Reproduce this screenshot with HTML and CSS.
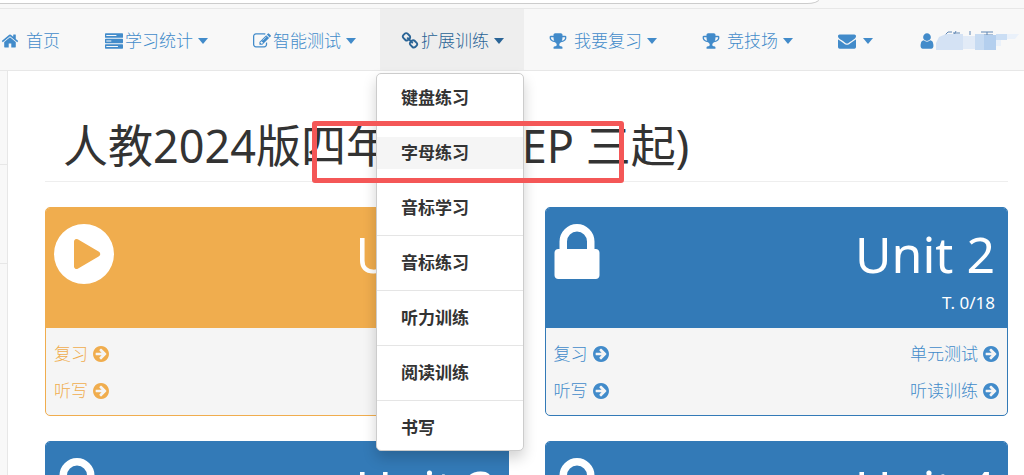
FILE: index.html
```
<!DOCTYPE html>
<html lang="zh-CN">
<head>
    <meta charset="UTF-8">
    <meta name="viewport" content="width=device-width, initial-scale=1.0">
    <title>人教2024版四年级上(PEP 三起)</title>
    <link rel="stylesheet" href="styles.css">
</head>
<body>
    <svg class="sprite" aria-hidden="true">
        <symbol id="i-home" viewBox="0 0 1792 1792"><path d="M1472 992v480q0 26-19 45t-45 19h-384v-384h-256v384h-384q-26 0-45-19t-19-45v-480q0-1 .5-3t.5-3l575-474 575 474q1 2 1 6zm223-69l-62 74q-8 9-21 11h-3q-13 0-21-7l-692-577-692 577q-12 8-24 7-13-2-21-11l-62-74q-8-10-7-23.500t11-21.500l719-599q32-26 76-26t76 26l244 204v-195q0-14 9-23t23-9h192q14 0 23 9t9 23v408l219 182q10 8 11 21.500t-7 23.500z"/></symbol>
        <symbol id="i-server" viewBox="0 0 1792 1792"><path fill-rule="evenodd" d="M64 128h1664q64 0 64 64v320q0 64-64 64H64q-64 0-64-64V192q0-64 64-64zm64 160v110h1010v-110zM64 672h1664q64 0 64 64v320q0 64-64 64H64q-64 0-64-64V736q0-64 64-64zm64 170v110h500v-110zM64 1216h1664q64 0 64 64v320q0 64-64 64H64q-64 0-64-64v-320q0-64 64-64zm64 170v110h1160v-110z"/></symbol>
        <symbol id="i-edit" viewBox="0 0 1792 1792"><path d="M888 1184l116-116-152-152-116 116v56h96v96h56zm440-720q-16-16-33 1l-350 350q-17 17-1 33t33-1l350-350q17-17 1-33zm80 594v190q0 119-84.500 203.500t-203.500 84.500h-832q-119 0-203.500-84.500t-84.500-203.500v-832q0-119 84.500-203.500t203.500-84.500h832q63 0 117 25 15 7 18 23 3 17-9 29l-49 49q-14 14-32 8-23-6-45-6h-832q-66 0-113 47t-47 113v832q0 66 47 113t113 47h832q66 0 113-47t47-113v-126q0-13 9-22l64-64q15-15 35-7t20 29zm-96-738l288 288-672 672h-288v-288zm444 132l-92 92-288-288 92-92q28-28 68-28t68 28l152 152q28 28 28 68t-28 68z"/></symbol>
        <symbol id="i-link" viewBox="0 0 1792 1792"><path d="M1520 1216q0-40-28-68l-208-208q-28-28-68-28-42 0-72 32 3 3 19 18.500t21.500 21.500 15 19 13 25.500 3.500 27.500q0 40-28 68t-68 28q-15 0-27.500-3.500t-25.500-13-19-15-21.500-21.500-18.500-19q-33 31-33 73 0 40 28 68l206 207q27 27 68 27 40 0 68-26l147-146q28-28 28-67zm-703-705q0-40-28-68l-206-207q-28-28-68-28-39 0-68 27l-147 146q-28 28-28 67 0 40 28 68l208 208q27 27 68 27 42 0 72-31-3-3-19-18.500t-21.500-21.500-15-19-13-25.500-3.500-27.500q0-40 28-68t68-28q15 0 27.500 3.500t25.500 13 19 15 21.500 21.500 18.500 19q33-31 33-73zm895 705q0 120-85 203l-147 146q-83 83-203 83-121 0-204-85l-206-207q-83-83-83-203 0-123 88-209l-88-88q-86 88-208 88-120 0-204-84l-208-208q-84-84-84-204t85-203l147-146q83-83 203-83 121 0 204 85l206 207q83 83 83 203 0 123-88 209l88 88q86-88 208-88 120 0 204 84l208 208q84 84 84 204z"/></symbol>
        <symbol id="i-trophy" viewBox="0 0 1792 1792"><path d="M522 883q-74-162-74-371h-256v96q0 78 94.500 162t235.500 113zm1078-275v-96h-256q0 209-74 371 141-29 235.500-113t94.500-162zm128-128v128q0 71-41.500 143t-112 130-173 97.500-215.500 44.500q-42 54-95 95-38 34-52.500 72.500t-14.500 89.500q0 54 30.500 91t97.500 37q75 0 133.500 45.500t58.500 114.500v64q0 14-9 23t-23 9h-832q-14 0-23-9t-9-23v-64q0-69 58.500-114.500t133.500-45.500q67 0 97.500-37t30.500-91q0-51-14.500-89.500t-52.500-72.500q-53-41-95-95-113-5-215.500-44.500t-173-97.500-112-130-41.500-143v-128q0-40 28-68t68-28h288v-96q0-66 47-113t113-47h576q66 0 113 47t47 113v96h288q40 0 68 28t28 68z"/></symbol>
        <symbol id="i-envelope" viewBox="0 0 1792 1792"><path d="M1792 710v794q0 66-47 113t-113 47h-1472q-66 0-113-47t-47-113v-794q44 49 101 87 362 246 497 345 57 42 92.500 65.500t94.500 48 110 24.500h2q51 0 110-24.500t94.500-48 92.500-65.500q170-123 498-345 57-39 100-87zm0-294q0 79-49 151t-122 123q-376 261-468 325-10 7-42.500 31t-54 38.500-52 32.500-57.500 27-50 9h-2q-23 0-50-9t-57.500-27-52-32.500-54-38.500-42.500-31q-91-64-262-182.500t-205-142.500q-62-42-117-115.500t-55-136.500q0-78 41.500-130t118.500-52h1472q65 0 112.500 47t47.500 113z"/></symbol>
        <symbol id="i-user" viewBox="0 0 1792 1792"><path d="M1536 1399q0 109-62.500 187t-150.500 78h-854q-88 0-150.500-78t-62.500-187q0-85 8.500-160.500t31.500-152 58.500-131 94-89 134.500-34.500q131 128 313 128t313-128q76 0 134.500 34.500t94 89 58.500 131 31.500 152 8.500 160.500zm-256-887q0 159-112.500 271.500t-271.500 112.500-271.500-112.500-112.500-271.500 112.500-271.500 271.500-112.500 271.500 112.500 112.500 271.500z"/></symbol>
        <symbol id="i-go" viewBox="128 128 1536 1536"><path d="M1413 896q0-27-18-45l-91-91-362-362q-18-18-45-18t-45 18l-91 91q-18 18-18 45t18 45l189 189h-502q-26 0-45 19t-19 45v128q0 26 19 45t45 19h502l-189 189q-19 19-19 45t19 45l91 91q18 18 45 18t45-18l362-362 91-91q18-18 18-45zm251 0q0 209-103 385.500t-279.500 279.500-385.500 103-385.500-103-279.500-279.500-103-385.500 103-385.500 279.500-279.500 385.500-103 385.500 103 279.500 279.500 103 385.500z"/></symbol>
        <symbol id="i-play" viewBox="128 128 1536 1536"><path fill-rule="evenodd" d="M896 128a768 768 0 1 1 0 1536 768 768 0 0 1 0-1536zM1280 951q32-18 32-55t-32-55L736 521q-31-19-64-1-32 19-32 56v640q0 37 32 56 16 8 32 8 17 0 32-9z"/></symbol>
        <symbol id="i-lock" viewBox="320 128 1152 1408"><path d="M640 768h512v-192q0-106-75-181t-181-75-181 75-75 181v192zm832 96v576q0 40-28 68t-68 28h-960q-40 0-68-28t-28-68v-576q0-40 28-68t68-28h32v-192q0-184 132-316t316-132 316 132 132 316v192h32q40 0 68 28t28 68z"/></symbol>
    </svg>

    <div class="topbar"><div class="address"></div></div>

    <nav class="navbar">
        <a class="nav-link home" href="#"><svg class="icon"><use href="#i-home"/></svg><span class="spaced">首页</span></a>
        <a class="nav-link" href="#"><svg class="icon"><use href="#i-server"/></svg><span class="tight">学习统计</span><i class="caret"></i></a>
        <a class="nav-link" href="#"><svg class="icon"><use href="#i-edit"/></svg><span class="tight">智能测试</span><i class="caret"></i></a>
        <div class="dropdown">
            <a class="nav-link active" href="#"><svg class="icon"><use href="#i-link"/></svg><span class="tight">扩展训练</span><i class="caret"></i></a>
            <ul class="menu">
                <li><a href="#">键盘练习</a></li>
                <li><a class="hover" href="#">字母练习</a></li>
                <li><a href="#">音标学习</a></li>
                <li><a href="#">音标练习</a></li>
                <li><a href="#">听力训练</a></li>
                <li><a href="#">阅读训练</a></li>
                <li><a href="#">书写</a></li>
            </ul>
        </div>
        <a class="nav-link" href="#"><svg class="icon"><use href="#i-trophy"/></svg><span class="spaced">我要复习</span><i class="caret"></i></a>
        <a class="nav-link" href="#"><svg class="icon"><use href="#i-trophy"/></svg><span class="spaced">竞技场</span><i class="caret"></i></a>
        <a class="nav-link" href="#" aria-label="消息"><svg class="icon"><use href="#i-envelope"/></svg><span class="tight"></span><i class="caret"></i></a>
        <a class="nav-link user" href="#" aria-label="用户"><svg class="icon"><use href="#i-user"/></svg>
            <svg class="masked" viewBox="0 0 84 24">
                <path fill="none" stroke="#5f86b4" d="M9 6l3-3h4M17 4h7M20 2l-2 4M34 2v4M45 3h12M46 6h11M51 3v3"/>
                <path fill="#d4e2f4" d="M3 8l7-3h17v16H0v-7z"/>
                <path fill="#e2ebf7" d="M27 7h12v13H27z"/>
                <path fill="#c7dbf2" d="M39 5h9v16h-9z"/>
                <path fill="#b4cfee" d="M48 6h12v15H48z"/>
                <path fill="#cbdef4" d="M60 5h11v6H60z"/>
                <path fill="#eaf1fa" d="M71 5h12l-4 5h-8zM60 11h5v6h-5z"/>
            </svg>
        </a>
    </nav>

    <div class="wrapper">
        <aside class="sidebar"><div></div><div></div></aside>
        <main class="page">
            <h1>人教2024版四年级上(PEP 三起)</h1>
            <div class="units">
                <section class="panel current">
                    <div class="panel-heading">
                        <svg class="play"><use href="#i-play"/></svg>
                        <div class="info"><div class="huge">Unit 1</div><div>T. 0/18</div></div>
                    </div>
                    <div class="panel-footer">
                        <a href="#">复习<svg><use href="#i-go"/></svg></a>
                        <a href="#">单元测试<svg><use href="#i-go"/></svg></a>
                        <a href="#">听写<svg><use href="#i-go"/></svg></a>
                        <a href="#">听读训练<svg><use href="#i-go"/></svg></a>
                    </div>
                </section>
                <section class="panel">
                    <div class="panel-heading">
                        <svg class="lock"><use href="#i-lock"/></svg>
                        <div class="info"><div class="huge">Unit 2</div><div>T. 0/18</div></div>
                    </div>
                    <div class="panel-footer">
                        <a href="#">复习<svg><use href="#i-go"/></svg></a>
                        <a href="#">单元测试<svg><use href="#i-go"/></svg></a>
                        <a href="#">听写<svg><use href="#i-go"/></svg></a>
                        <a href="#">听读训练<svg><use href="#i-go"/></svg></a>
                    </div>
                </section>
                <section class="panel">
                    <div class="panel-heading">
                        <svg class="lock"><use href="#i-lock"/></svg>
                        <div class="info"><div class="huge">Unit 3</div></div>
                    </div>
                </section>
                <section class="panel">
                    <div class="panel-heading">
                        <svg class="lock"><use href="#i-lock"/></svg>
                        <div class="info"><div class="huge">Unit 4</div></div>
                    </div>
                </section>
            </div>
        </main>
    </div>

    <div class="highlight"></div>
</body>
</html>
```
FILE: styles.css
```
* {
    box-sizing: border-box;
}
body {
    margin: 0;
    font-family: "Noto Sans", "Noto Sans CJK SC", sans-serif;
    font-size: 17px;
    line-height: 24px;
    color: #333;
    background: #fff;
    height: 100vh;
    overflow: hidden;
}
a {
    color: #428bca;
    text-decoration: none;
}
svg {
    fill: currentColor;
    flex: none;
}
.sprite {
    display: none;
}

/* top strip */
.topbar {
    height: 9px;
    background: #f8f8f8;
    border-bottom: 1px solid #e7e7e7;
}
.address {
    width: 80%;
    height: 4px;
    background: #fff;
    border-bottom: 1px solid #ccc;
    border-right: 1px solid #ccc;
    border-bottom-right-radius: 12px 4px;
}

/* navbar */
.navbar {
    display: flex;
    gap: 4px;
    background: #f8f8f8;
    border-bottom: 1px solid #e7e7e7;
}
.nav-link {
    display: flex;
    align-items: center;
    height: 61px;
    padding: 2px 20px 0 21px;
    font-weight: 300;
    white-space: nowrap;
}
.nav-link.home {
    padding-left: 1px;
}
.nav-link.active {
    background: #eee;
    color: #2a6496;
}
.icon {
    width: 18px;
    height: 18px;
}
.tight {
    margin-left: 2px;
}
.spaced {
    margin-left: 7px;
}
.caret {
    margin-left: 5px;
    border: 5px solid transparent;
    border-top-color: currentColor;
    border-top-width: 6px;
    border-bottom: 0;
}
.masked {
    width: 84px;
    height: 24px;
}
.user {
    padding-right: 0;
}

/* dropdown */
.dropdown {
    position: relative;
}
.menu {
    position: absolute;
    z-index: 10;
    top: 64px;
    left: -4px;
    right: 0;
    margin: 0;
    padding: 8px 0 6px;
    list-style: none;
    background: #fff;
    border: 1px solid #ccc;
    border-radius: 5px;
    box-shadow: 0 7px 14px rgba(0,0,0,0.18);
}
.menu li + li {
    margin-top: 11px;
    padding-top: 11px;
    border-top: 1px solid #e5e5e5;
}
.menu a {
    display: block;
    padding: 0 24px;
    line-height: 32px;
    font-weight: bold;
    color: #333;
}
.menu a.hover {
    background: #f5f5f5;
}

/* page */
.wrapper {
    display: flex;
    height: calc(100vh - 71px);
}
.sidebar {
    width: 8px;
    background: #f8f8f8;
    border-right: 1px solid #e7e7e7;
}
.sidebar div {
    height: 99px;
    border-bottom: 1px solid #e7e7e7;
}
.sidebar div:first-child {
    height: 94px;
}
.page {
    flex: 1;
    padding: 45px 16px 0 37px;
}
h1 {
    margin: 0 0 25px;
    padding: 0 0 5px 18px;
    font-size: 45px;
    font-weight: normal;
    line-height: 60px;
    border-bottom: 1px solid #eee;
    white-space: nowrap;
}
.units {
    display: grid;
    grid-template-columns: 1fr 1fr;
    gap: 25px 36px;
}
.panel {
    border: 1px solid #337ab7;
    border-radius: 5px;
    background: #f5f5f5;
    overflow: hidden;
}
.panel.current {
    border-color: #f0ad4e;
}
.panel-heading {
    display: flex;
    justify-content: space-between;
    padding: 16px 12px 13px 8px;
    color: #fff;
    background: #337ab7;
}
.current .panel-heading {
    background: #f0ad4e;
}
.current .panel-footer a {
    color: #f0ad4e;
}
.play {
    width: 60px;
    height: 60px;
}
.lock {
    width: 46px;
    height: 55px;
}
.info {
    text-align: right;
}
.huge {
    margin-bottom: 7px;
    font-size: 50px;
    line-height: 60px;
}
.panel-footer {
    display: grid;
    grid-template-columns: auto auto;
    justify-content: space-between;
    row-gap: 13px;
    padding: 14px 8px 12px;
}
.panel-footer a {
    display: flex;
    align-items: center;
    justify-content: space-between;
    gap: 5px;
    font-weight: 300;
}
.panel-footer a:nth-child(odd) {
    justify-content: flex-start;
}
.panel-footer svg {
    width: 16px;
    height: 16px;
}

/* red frame over the menu item */
.highlight {
    position: absolute;
    z-index: 20;
    top: 121px;
    left: 312px;
    width: 312px;
    height: 62px;
    border: 5px solid #f45757;
    border-radius: 3px;
    pointer-events: none;
}
```
